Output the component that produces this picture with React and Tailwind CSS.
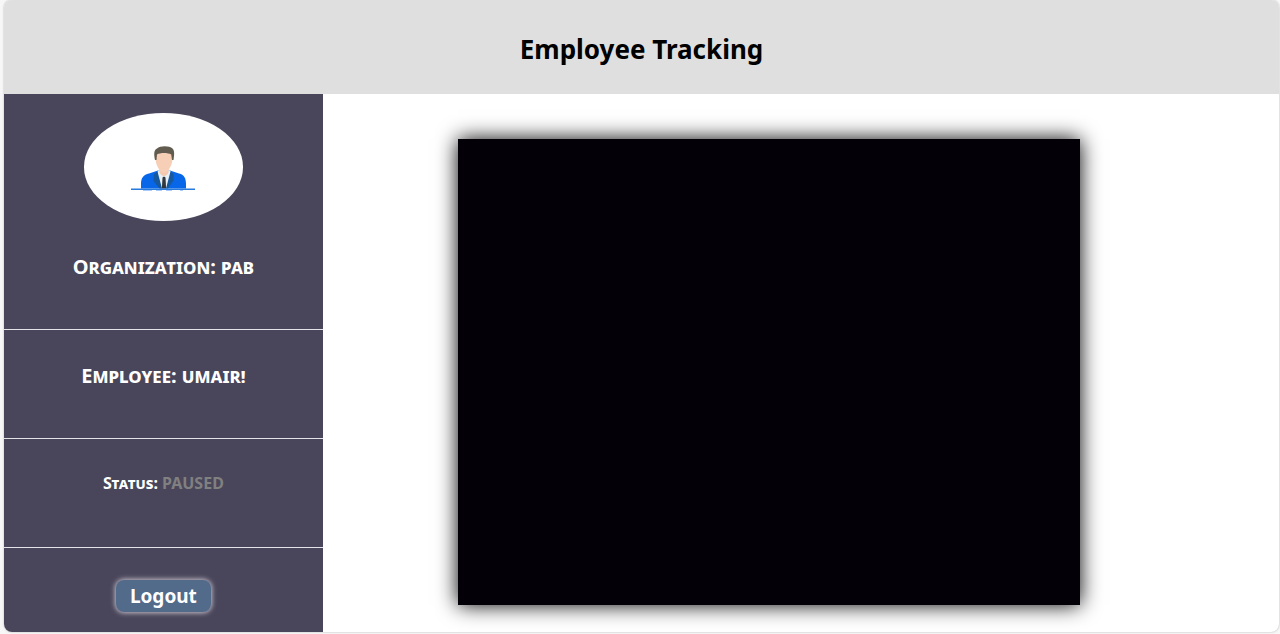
import React from 'react';

function EmployeeIcon() {
  return (
    <svg viewBox="0 0 64 48" className="h-12 w-16" role="img" aria-label="Employee avatar">
      <path d="M10 44.500V40c0-6 2.500-9.500 8-10.500l9-3h12l9 3c5 1 7 4.500 7 10.500v4.500z" fill="#0866e8" />
      <path d="M27 26.500h12l1.500 3L35.500 44.500h-5L26 29.500z" fill="#e8f0f7" />
      <path d="M26.500 27.500 23 30l-.5 7 6 7.500H31zM39.500 27.500l3 2.500v6.500L37 44.500h-2z" fill="#17599f" />
      <path d="m31.500 33.500 1.500-1 1.500 1 .6 11h-4.200z" fill="#30383e" />
      <path d="M28.500 20h9v8.500c-1 2-2.500 3.500-4.500 3.500s-3.500-1.500-4.500-3.500z" fill="#f5c9b0" />
      <path d="M24.500 9.500C24.500 5 28 4 33 4s8.500 1.500 8.500 6v4.500c0 6-4 14-8.500 14s-8.500-8-8.500-14z" fill="#f7cfb7" />
      <path d="M24 16c-1-5-1.500-10 2-11.500C29 1.500 38.500 1.500 41.500 4.500c2.500 2.500 1.500 7.500 1 11.500h-1.500l-.8-5.500C37 8.500 29 8.500 26 10.500L25.500 16z" fill="#625b50" />
      <path d="M0 44.500h64V46H0z" fill="#287bdd" />
      <path d="M12 46.500h9M25 46.500h6M35 46.500h6M49 46.500h3" stroke="#a9cbfa" strokeWidth="1" />
    </svg>
  );
}

function Sidebar() {
  return (
    <aside className="flex w-1/4 shrink-0 flex-col bg-[#49465b] text-center font-bold text-white">
      <section className="flex flex-col items-center border-b border-[#e4e4e8] pt-[19px] pb-12">
        <div className="flex h-[108px] w-1/2 items-center justify-center rounded-[50%] bg-white pt-0.5">
          <EmployeeIcon />
        </div>
        <h2 className="mt-8 text-xl leading-7 [font-variant-caps:small-caps]">Organization: pab</h2>
      </section>
      <section className="border-b border-[#e4e4e8] pt-8 pb-12">
        <h2 className="text-xl leading-7 [font-variant-caps:small-caps]">Employee: umair!</h2>
      </section>
      <section className="border-b border-[#e4e4e8] pt-8 pb-13">
        <h3 className="text-base leading-6 [font-variant-caps:small-caps]">
          Status: <span className="text-[#808080]">PAUSED</span>
        </h3>
      </section>
      <div className="flex justify-center pt-8 pb-5">
        <button
          type="button"
          className="h-8 rounded-lg bg-[#526b8b] px-3.5 text-[19px] leading-6 font-bold text-white shadow-[0_0_5px_1px_#c8c0cc]"
        >
          Logout
        </button>
      </div>
    </aside>
  );
}

export default function App() {
  return (
    <div className="min-h-screen bg-[#f7f7f7] pr-px pb-0.5 pl-1 font-['Noto_Sans','Open_Sans',sans-serif]">
      <div className="overflow-hidden rounded-lg bg-white shadow-[0_0_2px_#aaaaaa]">
        <header className="bg-[#dfdfdf] pt-[30px] pb-[26px] text-center">
          <h1 className="text-[26px] leading-[38px] font-bold text-black">Employee Tracking</h1>
        </header>
        <div className="flex">
          <Sidebar />
          <main className="flex flex-1 items-start justify-center pt-[45px]">
            <div
              role="img"
              aria-label="Camera feed"
              className="mr-16 aspect-4/3 w-[65%] bg-[#030008] shadow-[0_0_20px_#000000]"
            />
          </main>
        </div>
      </div>
    </div>
  );
}
